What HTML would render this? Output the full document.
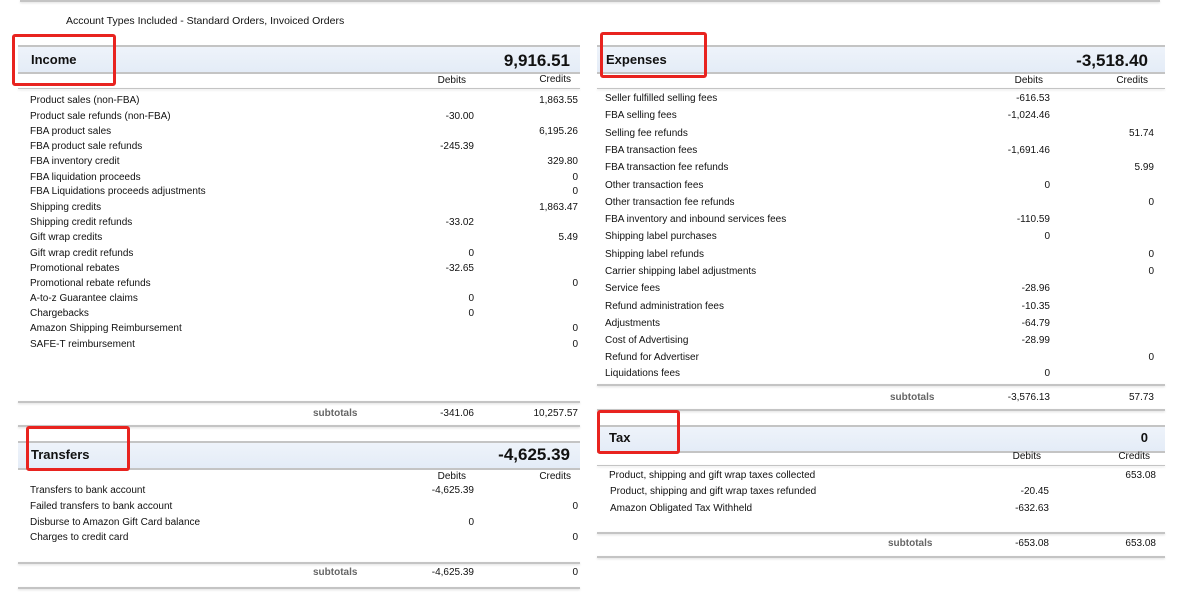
<!DOCTYPE html>
<html><head><meta charset="utf-8"><style>
body{margin:0;width:1186px;height:614px;background:#fff;position:relative;overflow:hidden;font-family:"Liberation Sans",Arial,sans-serif;color:#111}
div{position:absolute;white-space:nowrap}
.t{font-size:10px;line-height:12px}
.r{text-align:right;width:100px}
.ln{height:2px;background:#c4c4c4;box-shadow:0 1px 2px #ddd}
.band{background:linear-gradient(#eef3fa,#e4ecf7);border-top:2px solid #c4c4c4;border-bottom:2px solid #c4c4c4}
.h{font-weight:bold;font-size:13px;line-height:16px}
.big{font-weight:bold;font-size:17px;line-height:20px;text-align:right;width:200px}
.st{color:#666;font-weight:bold;font-size:10px;line-height:12px}
.red{border:3px solid #e8231f;border-radius:3px;box-sizing:border-box}
</style></head><body>
<div class="ln" style="left:20px;top:0;width:1140px"></div>
<div class="t" style="left:66px;top:15px;font-size:10.5px">Account Types Included - Standard Orders, Invoiced Orders</div>

<!-- Income -->
<div class="band" style="left:18px;top:45px;width:562px;height:25px"></div>
<div class="h" style="left:31px;top:52px">Income</div>
<div class="big" style="left:370px;top:51px">9,916.51</div>
<div class="t r" style="left:366px;top:75px">Debits</div>
<div class="t r" style="left:471px;top:74px">Credits</div>
<div class="ln" style="left:18px;top:88px;width:562px;height:1px"></div>
<div class="t" style="left:30px;top:95px">Product sales (non-FBA)</div><div class="t r" style="left:478px;top:95px">1,863.55</div>
<div class="t" style="left:30px;top:111px">Product sale refunds (non-FBA)</div><div class="t r" style="left:374px;top:111px">-30.00</div>
<div class="t" style="left:30px;top:126px">FBA product sales</div><div class="t r" style="left:478px;top:126px">6,195.26</div>
<div class="t" style="left:30px;top:141px">FBA product sale refunds</div><div class="t r" style="left:374px;top:141px">-245.39</div>
<div class="t" style="left:30px;top:156px">FBA inventory credit</div><div class="t r" style="left:478px;top:156px">329.80</div>
<div class="t" style="left:30px;top:172px">FBA liquidation proceeds</div><div class="t r" style="left:478px;top:172px">0</div>
<div class="t" style="left:30px;top:186px">FBA Liquidations proceeds adjustments</div><div class="t r" style="left:478px;top:186px">0</div>
<div class="t" style="left:30px;top:202px">Shipping credits</div><div class="t r" style="left:478px;top:202px">1,863.47</div>
<div class="t" style="left:30px;top:217px">Shipping credit refunds</div><div class="t r" style="left:374px;top:217px">-33.02</div>
<div class="t" style="left:30px;top:232px">Gift wrap credits</div><div class="t r" style="left:478px;top:232px">5.49</div>
<div class="t" style="left:30px;top:248px">Gift wrap credit refunds</div><div class="t r" style="left:374px;top:248px">0</div>
<div class="t" style="left:30px;top:263px">Promotional rebates</div><div class="t r" style="left:374px;top:263px">-32.65</div>
<div class="t" style="left:30px;top:278px">Promotional rebate refunds</div><div class="t r" style="left:478px;top:278px">0</div>
<div class="t" style="left:30px;top:293px">A-to-z Guarantee claims</div><div class="t r" style="left:374px;top:293px">0</div>
<div class="t" style="left:30px;top:308px">Chargebacks</div><div class="t r" style="left:374px;top:308px">0</div>
<div class="t" style="left:30px;top:323px">Amazon Shipping Reimbursement</div><div class="t r" style="left:478px;top:323px">0</div>
<div class="t" style="left:30px;top:339px">SAFE-T reimbursement</div><div class="t r" style="left:478px;top:339px">0</div>
<div class="ln" style="left:18px;top:401px;width:562px"></div>
<div class="st" style="left:313px;top:408px">subtotals</div>
<div class="t r" style="left:374px;top:408px">-341.06</div><div class="t r" style="left:478px;top:408px">10,257.57</div>
<div class="ln" style="left:18px;top:425px;width:562px"></div>

<!-- Transfers -->
<div class="band" style="left:18px;top:441px;width:562px;height:25px"></div>
<div class="h" style="left:31px;top:447px">Transfers</div>
<div class="big" style="left:370px;top:445px">-4,625.39</div>
<div class="t r" style="left:366px;top:471px">Debits</div>
<div class="t r" style="left:471px;top:471px">Credits</div>
<div class="t" style="left:30px;top:485px">Transfers to bank account</div><div class="t r" style="left:374px;top:485px">-4,625.39</div>
<div class="t" style="left:30px;top:501px">Failed transfers to bank account</div><div class="t r" style="left:478px;top:501px">0</div>
<div class="t" style="left:30px;top:517px">Disburse to Amazon Gift Card balance</div><div class="t r" style="left:374px;top:517px">0</div>
<div class="t" style="left:30px;top:532px">Charges to credit card</div><div class="t r" style="left:478px;top:532px">0</div>
<div class="ln" style="left:18px;top:562px;width:562px"></div>
<div class="st" style="left:313px;top:567px">subtotals</div>
<div class="t r" style="left:374px;top:567px">-4,625.39</div><div class="t r" style="left:478px;top:567px">0</div>
<div class="ln" style="left:18px;top:587px;width:562px"></div>

<!-- Expenses -->
<div class="band" style="left:597px;top:45px;width:568px;height:25px"></div>
<div class="h" style="left:606px;top:52px">Expenses</div>
<div class="big" style="left:948px;top:51px">-3,518.40</div>
<div class="t r" style="left:943px;top:75px">Debits</div>
<div class="t r" style="left:1048px;top:75px">Credits</div>
<div class="ln" style="left:597px;top:88px;width:568px;height:1px"></div>
<div class="t" style="left:605px;top:93px">Seller fulfilled selling fees</div><div class="t r" style="left:950px;top:93px">-616.53</div>
<div class="t" style="left:605px;top:110px">FBA selling fees</div><div class="t r" style="left:950px;top:110px">-1,024.46</div>
<div class="t" style="left:605px;top:128px">Selling fee refunds</div><div class="t r" style="left:1054px;top:128px">51.74</div>
<div class="t" style="left:605px;top:145px">FBA transaction fees</div><div class="t r" style="left:950px;top:145px">-1,691.46</div>
<div class="t" style="left:605px;top:162px">FBA transaction fee refunds</div><div class="t r" style="left:1054px;top:162px">5.99</div>
<div class="t" style="left:605px;top:180px">Other transaction fees</div><div class="t r" style="left:950px;top:180px">0</div>
<div class="t" style="left:605px;top:197px">Other transaction fee refunds</div><div class="t r" style="left:1054px;top:197px">0</div>
<div class="t" style="left:605px;top:214px">FBA inventory and inbound services fees</div><div class="t r" style="left:950px;top:214px">-110.59</div>
<div class="t" style="left:605px;top:231px">Shipping label purchases</div><div class="t r" style="left:950px;top:231px">0</div>
<div class="t" style="left:605px;top:249px">Shipping label refunds</div><div class="t r" style="left:1054px;top:249px">0</div>
<div class="t" style="left:605px;top:266px">Carrier shipping label adjustments</div><div class="t r" style="left:1054px;top:266px">0</div>
<div class="t" style="left:605px;top:283px">Service fees</div><div class="t r" style="left:950px;top:283px">-28.96</div>
<div class="t" style="left:605px;top:301px">Refund administration fees</div><div class="t r" style="left:950px;top:301px">-10.35</div>
<div class="t" style="left:605px;top:318px">Adjustments</div><div class="t r" style="left:950px;top:318px">-64.79</div>
<div class="t" style="left:605px;top:335px">Cost of Advertising</div><div class="t r" style="left:950px;top:335px">-28.99</div>
<div class="t" style="left:605px;top:352px">Refund for Advertiser</div><div class="t r" style="left:1054px;top:352px">0</div>
<div class="t" style="left:605px;top:368px">Liquidations fees</div><div class="t r" style="left:950px;top:368px">0</div>
<div class="ln" style="left:597px;top:384px;width:568px"></div>
<div class="st" style="left:890px;top:392px">subtotals</div>
<div class="t r" style="left:950px;top:392px">-3,576.13</div><div class="t r" style="left:1054px;top:392px">57.73</div>
<div class="ln" style="left:597px;top:409px;width:568px"></div>

<!-- Tax -->
<div class="band" style="left:597px;top:425px;width:568px;height:24px"></div>
<div class="h" style="left:609px;top:430px">Tax</div>
<div class="big" style="left:948px;top:428px;font-size:13px">0</div>
<div class="t r" style="left:941px;top:451px">Debits</div>
<div class="t r" style="left:1050px;top:451px">Credits</div>
<div class="ln" style="left:597px;top:465px;width:568px;height:1px"></div>
<div class="t" style="left:609px;top:470px">Product, shipping and gift wrap taxes collected</div><div class="t r" style="left:1056px;top:470px">653.08</div>
<div class="t" style="left:610px;top:486px">Product, shipping and gift wrap taxes refunded</div><div class="t r" style="left:949px;top:486px">-20.45</div>
<div class="t" style="left:610px;top:503px">Amazon Obligated Tax Withheld</div><div class="t r" style="left:949px;top:503px">-632.63</div>
<div class="ln" style="left:597px;top:532px;width:568px"></div>
<div class="st" style="left:888px;top:538px">subtotals</div>
<div class="t r" style="left:949px;top:538px">-653.08</div><div class="t r" style="left:1056px;top:538px">653.08</div>
<div class="ln" style="left:597px;top:556px;width:568px"></div>

<!-- red boxes -->
<div class="red" style="left:12px;top:34px;width:104px;height:52px"></div>
<div class="red" style="left:600px;top:32px;width:107px;height:46px"></div>
<div class="red" style="left:26px;top:426px;width:104px;height:45px"></div>
<div class="red" style="left:597px;top:410px;width:83px;height:44px"></div>
</body></html>
